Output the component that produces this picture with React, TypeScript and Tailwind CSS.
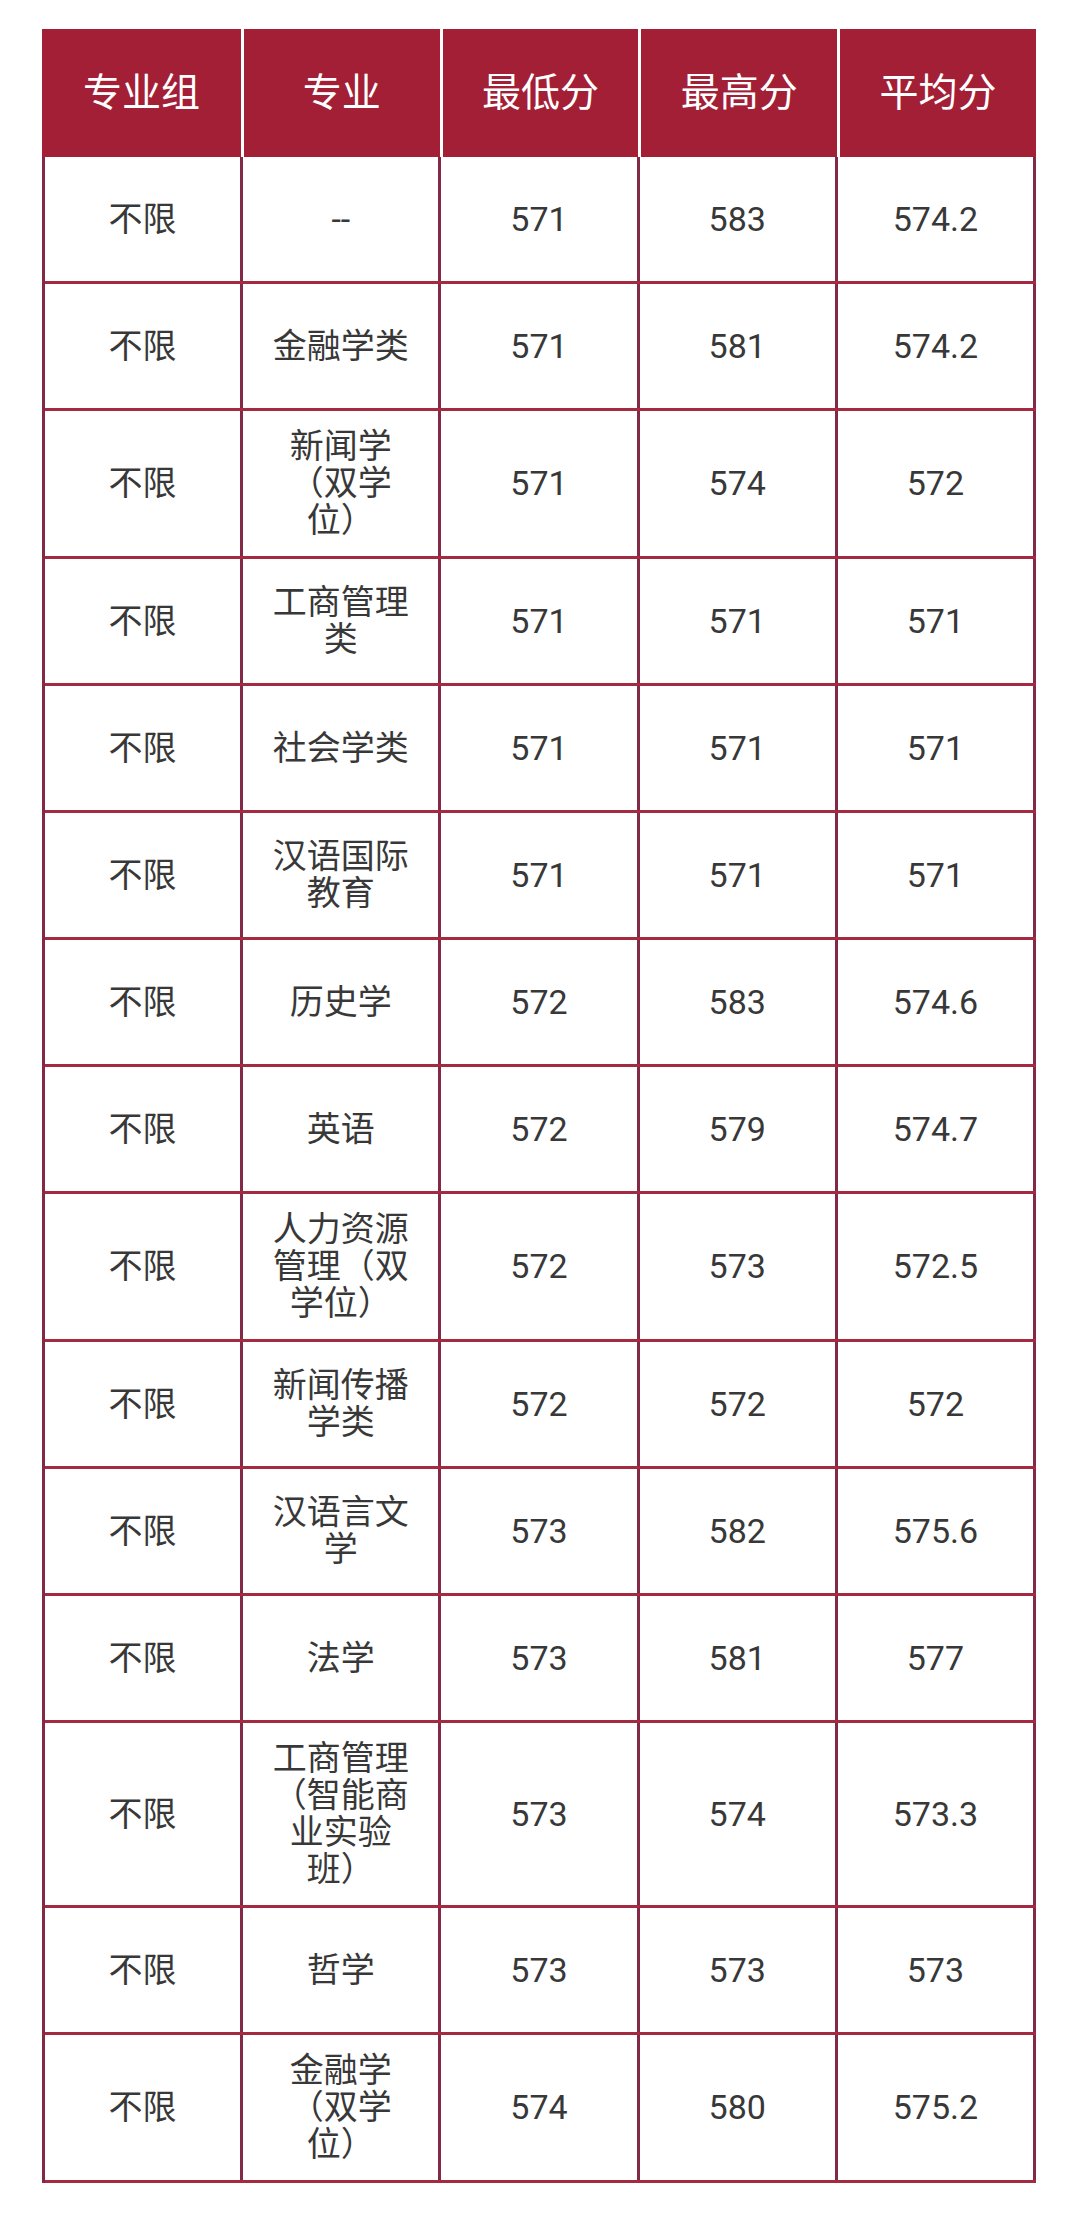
import React from 'react';

interface Row {
  group: string;
  major: string;
  min: string;
  max: string;
  avg: string;
}

const rows: Row[] = [
  { group: '不限', major: '--', min: '571', max: '583', avg: '574.2' },
  { group: '不限', major: '金融学类', min: '571', max: '581', avg: '574.2' },
  { group: '不限', major: '新闻学（双学位）', min: '571', max: '574', avg: '572' },
  { group: '不限', major: '工商管理类', min: '571', max: '571', avg: '571' },
  { group: '不限', major: '社会学类', min: '571', max: '571', avg: '571' },
  { group: '不限', major: '汉语国际教育', min: '571', max: '571', avg: '571' },
  { group: '不限', major: '历史学', min: '572', max: '583', avg: '574.6' },
  { group: '不限', major: '英语', min: '572', max: '579', avg: '574.7' },
  { group: '不限', major: '人力资源管理（双学位）', min: '572', max: '573', avg: '572.5' },
  { group: '不限', major: '新闻传播学类', min: '572', max: '572', avg: '572' },
  { group: '不限', major: '汉语言文学', min: '573', max: '582', avg: '575.6' },
  { group: '不限', major: '法学', min: '573', max: '581', avg: '577' },
  { group: '不限', major: '工商管理（智能商业实验班）', min: '573', max: '574', avg: '573.3' },
  { group: '不限', major: '哲学', min: '573', max: '573', avg: '573' },
  { group: '不限', major: '金融学（双学位）', min: '574', max: '580', avg: '575.2' },
];

const headers = ['专业组', '专业', '最低分', '最高分', '平均分'];

const Cell = ({ children }: { children: React.ReactNode }) => (
  <div className="flex min-h-[124px] items-center justify-center border-r-[3px] border-[#822a45] px-5 py-[17px] text-center leading-[37px]">
    <span className="block w-full [text-spacing-trim:space-all]">{children}</span>
  </div>
);

export default function App() {
  return (
    <div
      lang="zh-CN"
      className="min-h-[2214px] w-[1080px] bg-white pl-[42px] pt-[29px]"
      style={{ fontFamily: 'Roboto, "Noto Sans CJK SC", sans-serif' }}
    >
      <div className="w-[994px]">
        {/* header */}
        <div className="grid h-[128px] grid-cols-5 bg-[#a21f36] text-[39px] text-white">
          {headers.map((h, i) => (
            <div
              key={h}
              className={
                i === 0
                  ? 'flex items-center justify-center'
                  : 'flex items-center justify-center border-l-[3px] border-white'
              }
            >
              {h}
            </div>
          ))}
        </div>

        {/* body */}
        <div className="border-l-[3px] border-[#822a45] text-[34px] text-[#383838]">
          {rows.map((r, i) => (
            <div key={i} className="grid grid-cols-5 border-b-[3px] border-[#a32a40]">
              <Cell>{r.group}</Cell>
              <Cell>{r.major}</Cell>
              <Cell>{r.min}</Cell>
              <Cell>{r.max}</Cell>
              <Cell>{r.avg}</Cell>
            </div>
          ))}
        </div>
      </div>
    </div>
  );
}
